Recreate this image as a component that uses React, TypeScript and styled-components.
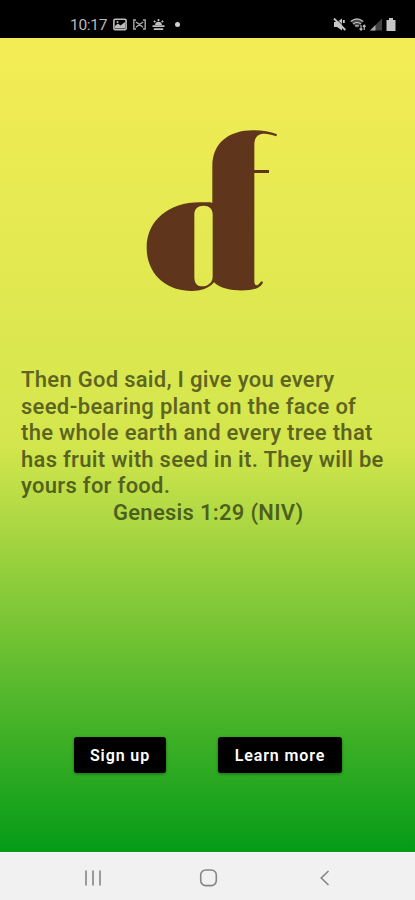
import React from "react";
import styled, { createGlobalStyle } from "styled-components";

const GlobalStyle = createGlobalStyle`
  * { box-sizing: border-box; }
  body { margin: 0; font-family: Roboto, sans-serif; }
`;

const Screen = styled.div`
  width: 415px;
  height: 900px;
  display: flex;
  flex-direction: column;
  overflow: hidden;
`;

const StatusBar = styled.header`
  height: 38px;
  flex: none;
  background: #000;
  color: #b9b9b9;
  padding: 11px 19px 0 70px;
  display: flex;
  justify-content: space-between;
`;

const StatusGroup = styled.div<{ $gap: number }>`
  display: flex;
  align-items: center;
  gap: ${(p) => p.$gap}px;
  height: 27px;
`;

const Clock = styled.time`
  font-size: 15.5px;
  letter-spacing: -0.3px;
`;

const Dot = styled.span`
  width: 5px;
  height: 5px;
  margin-left: 4px;
  border-radius: 50%;
  background: #d0d0d0;
`;

const Welcome = styled.main`
  height: 814px;
  flex: none;
  display: flex;
  flex-direction: column;
  background: linear-gradient(#f4ec55 0%, #d4e64d 50%, #049b17 100%);
`;

const Logo = styled.svg`
  width: 155px;
  height: 180px;
  margin: 82px 0 0 135px;
  flex: none;
`;

const Verse = styled.blockquote`
  margin: 67px 0 0 21px;
  color: rgba(0, 0, 0, 0.56);
  font-size: 22px;
  font-weight: 600;
  line-height: 26.5px;
  letter-spacing: 0.27px;
  white-space: nowrap;
`;

const Line = styled.span`
  display: block;
`;

const Citation = styled.cite`
  display: block;
  font-style: normal;
  margin-left: 92px;
`;

const Actions = styled.div`
  display: flex;
  gap: 52px;
  margin: 211px 0 0 74px;
`;

const Button = styled.button<{ $width: number }>`
  width: ${(p) => p.$width}px;
  height: 36px;
  padding: 0;
  border: 0;
  border-radius: 3px;
  background: #000;
  color: #fff;
  font: 600 16px Roboto, sans-serif;
  letter-spacing: 0.9px;
  white-space: nowrap;
  box-shadow: 0 1px 3px rgba(0, 0, 0, 0.4);
`;

const NavBar = styled.nav`
  height: 48px;
  flex: none;
  display: flex;
  align-items: center;
  justify-content: space-between;
  padding: 3px 77px 0 80px;
  background: #f1f1f1;
  border-top: 1px solid #f8fcf7;
`;

const NavIcon = styled.svg`
  width: 26px;
  height: 26px;
  fill: none;
  stroke: #858585;
  stroke-width: 1.6;
`;

export default function App() {
  return (
    <Screen>
      <GlobalStyle />
      <StatusBar>
        <StatusGroup $gap={6}>
          <Clock>10:17</Clock>
          <svg width="14" height="13" viewBox="0 0 14 13">
            <rect x=".9" y="1.2" width="12.2" height="10.6" rx="1.2" fill="none" stroke="#bdbdbd" strokeWidth="1.6" />
            <path d="M2 10.5V8l3-2.5 2.5 2L12 4v6.5z" fill="#bdbdbd" />
            <circle cx="4.5" cy="4" r="1" fill="#bdbdbd" />
          </svg>
          <svg width="13" height="11" viewBox="0 0 13 11" fill="none" stroke="#a8a8a8" strokeWidth="1.4">
            <path d="M3 1H.8v9H3M10 1h2.2v9H10M2.8 3l3.7 2.4L10.2 3M2.8 8.2l3.7-2.6 3.7 2.6" />
          </svg>
          <svg width="13" height="12" viewBox="0 0 13 12">
            <path d="M3 6.2a3.5 3.5 0 0 1 7 0z" fill="#bdbdbd" />
            <path d="M6.5 0v2M2 1.8l1.3 1.4M11 1.8L9.7 3.2M.5 7.2h12M1.8 10.2h9.4" stroke="#bdbdbd" strokeWidth="1.7" />
          </svg>
          <Dot />
        </StatusGroup>
        <StatusGroup $gap={4}>
          <svg width="13" height="13" viewBox="0 0 13 13">
            <path d="M1 4h3l5-3.5v12L4 9H1z" fill="#c6c6c6" />
            <path d="M2 -.5l11 11" stroke="#000" strokeWidth="1" />
            <path d="M1 .5l11.3 11.5M10.8 2v3" stroke="#c6c6c6" strokeWidth="1.9" />
          </svg>
          <svg width="16" height="13" viewBox="0 0 16 13">
            <path d="M1 3.5Q7 -1.2 13 3.5L7 10z" fill="#444" />
            <path d="M.7 3.5Q7 -1.5 13.3 3.5M3 6Q7 2.8 11 6M5 8.2Q7 7 9 8.2" fill="none" stroke="#bbb" strokeWidth="1.3" />
            <path d="M11 7v5M9.5 10.5L11 12.2l1.4-1.6M14.2 12V7M12.9 8.6L14.2 7l1.4 1.6" fill="none" stroke="#c6c6c6" strokeWidth="1.1" />
          </svg>
          <svg width="12" height="13" viewBox="0 0 12 13">
            <path d="M0 12.5L12 .5v12z" fill="#414141" />
            <path d="M0 12.5l5.5-5.5v5.5z" fill="#aaa" />
          </svg>
          <svg width="10" height="13" viewBox="0 0 10 13">
            <path d="M3 0h4v2h2.5v11H.5V2H3z" fill="#c6c6c6" />
          </svg>
        </StatusGroup>
      </StatusBar>
      <Welcome>
        <Logo viewBox="0 0 465 540" role="img" aria-label="df">
          <path
            fill="#5f361b"
            fillRule="evenodd"
            d="M232 248V140C232 70 280 31 355 31C382 31 405 34 426 43L424 49C405 42 391 40 380 42C365 45 358 56 358 75V150H402V159H358V482C358 494 362 497 368 495C374 493 376 484 381 484C388 487 380 496 372 501C353 516 266 518 237 487C221 506 197 513 171 513C93 513 35 462 35 383C35 302 101 247 195 247C210 247 222 246 232 248ZM178 283V470C178 488 185 499 201 499C220 499 233 486 233 470V283C233 267 222 257 206 257C189 257 178 267 178 283Z"
          />
        </Logo>
        <Verse>
          <Line>Then God said, I give you every</Line>
          <Line>seed-bearing plant on the face of</Line>
          <Line>the whole earth and every tree that</Line>
          <Line>has fruit with seed in it. They will be</Line>
          <Line>yours for food.</Line>
          <Citation>Genesis 1:29 (NIV)</Citation>
        </Verse>
        <Actions>
          <Button $width={92}>Sign up</Button>
          <Button $width={124}>Learn more</Button>
        </Actions>
      </Welcome>
      <NavBar>
        <NavIcon viewBox="0 0 26 26"><path d="M6 5.5v15M13 5.5v15M20 5.5v15" /></NavIcon>
        <NavIcon viewBox="0 0 26 26"><rect x="4.7" y="5" width="15.6" height="15.6" rx="5" /></NavIcon>
        <NavIcon viewBox="0 0 26 26"><path d="M16.5 6l-7.3 7 7.3 7" /></NavIcon>
      </NavBar>
    </Screen>
  );
}
